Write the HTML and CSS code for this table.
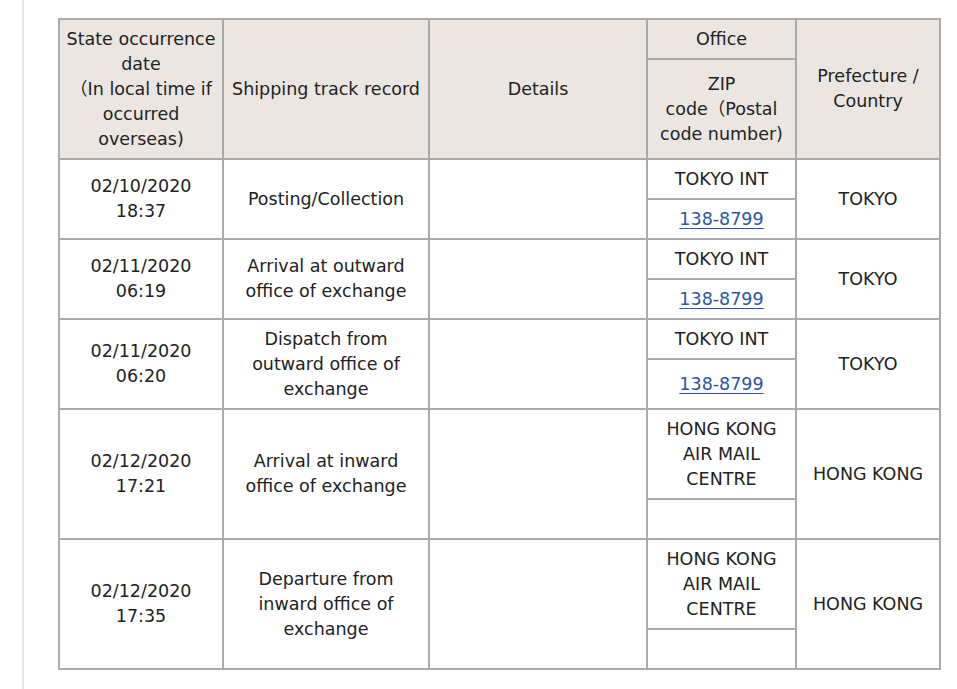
FILE: index.html
```html
<!DOCTYPE html>
<html lang="en">
<head>
<meta charset="utf-8">
<title>Shipping track record</title>
<link rel="stylesheet" href="styles.css">
</head>
<body>
<div class="frame">
  <table class="track">
    <colgroup>
      <col class="c-date">
      <col class="c-record">
      <col class="c-details">
      <col class="c-office">
      <col class="c-pref">
    </colgroup>
    <thead>
      <tr class="h1">
        <th rowspan="2">State occurrence<br>date<br>（In local time if<br>occurred<br>overseas)</th>
        <th rowspan="2">Shipping track record</th>
        <th rowspan="2">Details</th>
        <th>Office</th>
        <th rowspan="2">Prefecture /<br>Country</th>
      </tr>
      <tr class="h2">
        <th>ZIP<br>code（Postal<br>code number)</th>
      </tr>
    </thead>
    <tbody>
      <tr>
        <td rowspan="2">02/10/2020<br>18:37</td>
        <td rowspan="2">Posting/Collection</td>
        <td rowspan="2"></td>
        <td>TOKYO INT</td>
        <td rowspan="2">TOKYO</td>
      </tr>
      <tr>
        <td><a href="#">138-8799</a></td>
      </tr>
      <tr>
        <td rowspan="2">02/11/2020<br>06:19</td>
        <td rowspan="2">Arrival at outward office of exchange</td>
        <td rowspan="2"></td>
        <td>TOKYO INT</td>
        <td rowspan="2">TOKYO</td>
      </tr>
      <tr>
        <td><a href="#">138-8799</a></td>
      </tr>
      <tr>
        <td rowspan="2">02/11/2020<br>06:20</td>
        <td rowspan="2">Dispatch from outward office of exchange</td>
        <td rowspan="2"></td>
        <td>TOKYO INT</td>
        <td rowspan="2">TOKYO</td>
      </tr>
      <tr class="grow">
        <td><a href="#">138-8799</a></td>
      </tr>
      <tr>
        <td rowspan="2">02/12/2020<br>17:21</td>
        <td rowspan="2">Arrival at inward office of exchange</td>
        <td rowspan="2"></td>
        <td>HONG KONG AIR MAIL CENTRE</td>
        <td rowspan="2">HONG KONG</td>
      </tr>
      <tr>
        <td>&nbsp;</td>
      </tr>
      <tr>
        <td rowspan="2">02/12/2020<br>17:35</td>
        <td rowspan="2">Departure from inward office of exchange</td>
        <td rowspan="2"></td>
        <td>HONG KONG AIR MAIL CENTRE</td>
        <td rowspan="2">HONG KONG</td>
      </tr>
      <tr>
        <td>&nbsp;</td>
      </tr>
    </tbody>
  </table>
</div>
</body>
</html>
```
FILE: styles.css
```css
html, body {
  margin: 0;
  padding: 0;
  background: #ffffff;
}

.frame {
  margin-left: 22px;
  border-left: 2px solid #e6e6e6;
  padding: 18px 0 20px 34px;
  min-height: 100vh;
  box-sizing: border-box;
}

.track {
  border-collapse: collapse;
  table-layout: fixed;
  width: 883px;
  font-family: "DejaVu Sans", "Noto Sans CJK JP", sans-serif;
  font-size: 17.5px;
  line-height: 25px;
  color: #222222;
}

.c-date { width: 164px; }
.c-record { width: 206px; }
.c-details { width: 218px; }
.c-office { width: 149px; }
.c-pref { width: 144px; }

.track th,
.track td {
  border: 2px solid #aaaaaa;
  padding: 6.5px 6px;
  text-align: center;
  vertical-align: middle;
  font-weight: normal;
}

.track th {
  background: #ebe6e1;
}

.track .h2 {
  height: 100px;
}

.track .grow {
  height: 50px;
}

.track a {
  color: #2b56a3;
  text-decoration: underline;
  text-underline-offset: 3px;
}
```
